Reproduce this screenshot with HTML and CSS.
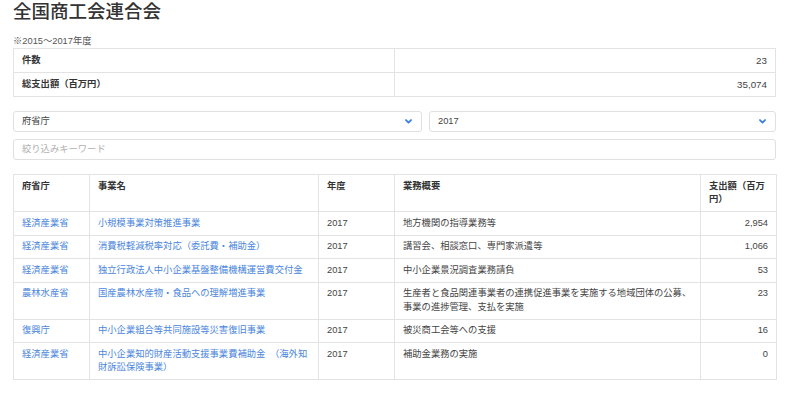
FILE: index.html
```html
<!DOCTYPE html>
<html lang="ja">
<head>
<meta charset="utf-8">
<link rel="stylesheet" href="styles.css">
</head>
<body>
<div class="page">
  <h1 class="title">全国商工会連合会</h1>
  <p class="note">※2015〜2017年度</p>
  <table class="summary">
    <tr><th>件数</th><td>23</td></tr>
    <tr><th>総支出額（百万円）</th><td>35,074</td></tr>
  </table>
  <div class="filters">
    <div class="select"><span>府省庁</span><svg class="chev" viewBox="0 0 10 7" width="7" height="5"><path d="M1.4 1.4 L5 5 L8.6 1.4" fill="none" stroke="#3d7fe0" stroke-width="2.6" stroke-linecap="round" stroke-linejoin="round"/></svg></div>
    <div class="select"><span>2017</span><svg class="chev" viewBox="0 0 10 7" width="7" height="5"><path d="M1.4 1.4 L5 5 L8.6 1.4" fill="none" stroke="#3d7fe0" stroke-width="2.6" stroke-linecap="round" stroke-linejoin="round"/></svg></div>
  </div>
  <div class="search">絞り込みキーワード</div>
  <table class="data">
    <colgroup>
      <col class="c1"><col class="c2"><col class="c3"><col class="c4"><col class="c5">
    </colgroup>
    <thead>
      <tr><th>府省庁</th><th>事業名</th><th>年度</th><th>業務概要</th><th>支出額（百万円）</th></tr>
    </thead>
    <tbody>
      <tr><td><a>経済産業省</a></td><td><a>小規模事業対策推進事業</a></td><td>2017</td><td>地方機関の指導業務等</td><td class="num">2,954</td></tr>
      <tr><td><a>経済産業省</a></td><td><a>消費税軽減税率対応（委託費・補助金）</a></td><td>2017</td><td>講習会、相談窓口、専門家派遣等</td><td class="num">1,066</td></tr>
      <tr><td><a>経済産業省</a></td><td><a>独立行政法人中小企業基盤整備機構運営費交付金</a></td><td>2017</td><td>中小企業景況調査業務請負</td><td class="num">53</td></tr>
      <tr><td><a>農林水産省</a></td><td><a>国産農林水産物・食品への理解増進事業</a></td><td>2017</td><td>生産者と食品関連事業者の連携促進事業を実施する地域団体の公募、事業の進捗管理、支払を実施</td><td class="num">23</td></tr>
      <tr><td><a>復興庁</a></td><td><a>中小企業組合等共同施設等災害復旧事業</a></td><td>2017</td><td>被災商工会等への支援</td><td class="num">16</td></tr>
      <tr><td><a>経済産業省</a></td><td><a>中小企業知的財産活動支援事業費補助金　（海外知財訴訟保険事業）</a></td><td>2017</td><td>補助金業務の実施</td><td class="num">0</td></tr>
    </tbody>
  </table>
</div>
</body>
</html>
```
FILE: styles.css
```css
* { box-sizing: border-box; }
html, body { margin: 0; padding: 0; background: #fff; }
body {
  font-family: "Liberation Sans", "Noto Sans CJK JP", sans-serif;
  font-size: 9.3px;
  line-height: 13.5px;
  color: #3a3a3a;
}
.page { padding: 0 24px 0 13px; }
.title {
  margin: 0;
  font-size: 18.5px;
  line-height: 24px;
  font-weight: 500;
  color: #333;
}
.note {
  margin: 11px 0 0;
  font-size: 9.3px;
  line-height: 13px;
  color: #555;
}
.summary {
  width: 100%;
  border-collapse: collapse;
  table-layout: fixed;
}
.summary th, .summary td {
  border: 1px solid #e3e3e3;
  height: 24px;
  padding: 0 8px;
  vertical-align: middle;
}
.summary th { text-align: left; font-weight: 700; color: #333; }
.summary td { text-align: right; color: #444; font-size: 9.8px; }
.filters {
  display: grid;
  grid-template-columns: 409px 1fr;
  gap: 7px;
  margin-top: 14px;
}
.select {
  height: 21px;
  border: 1px solid #e0e0e0;
  border-radius: 3px;
  display: flex;
  align-items: center;
  justify-content: space-between;
  padding: 0 9px 0 8px;
  color: #444;
}
.chev { display: block; }
.search {
  margin-top: 7px;
  height: 21px;
  border: 1px solid #e0e0e0;
  border-radius: 3px;
  padding: 0 8px;
  display: flex;
  align-items: center;
  color: #b0b0b0;
}
.data {
  margin-top: 14px;
  width: 100%;
  border-collapse: collapse;
  table-layout: fixed;
}
.c1 { width: 76px; }
.c2 { width: 229px; }
.c3 { width: 76px; }
.c4 { width: 306px; }
.c5 { width: 76px; }
.data th, .data td {
  border: 1px solid #e3e3e3;
  padding: 4.5px 8px;
  text-align: left;
  vertical-align: top;
}
.data th { font-weight: 700; color: #333; }
.data td { color: #444; }
.data a { color: #4b86dc; text-decoration: none; }
.data td.num { text-align: right; }
```
